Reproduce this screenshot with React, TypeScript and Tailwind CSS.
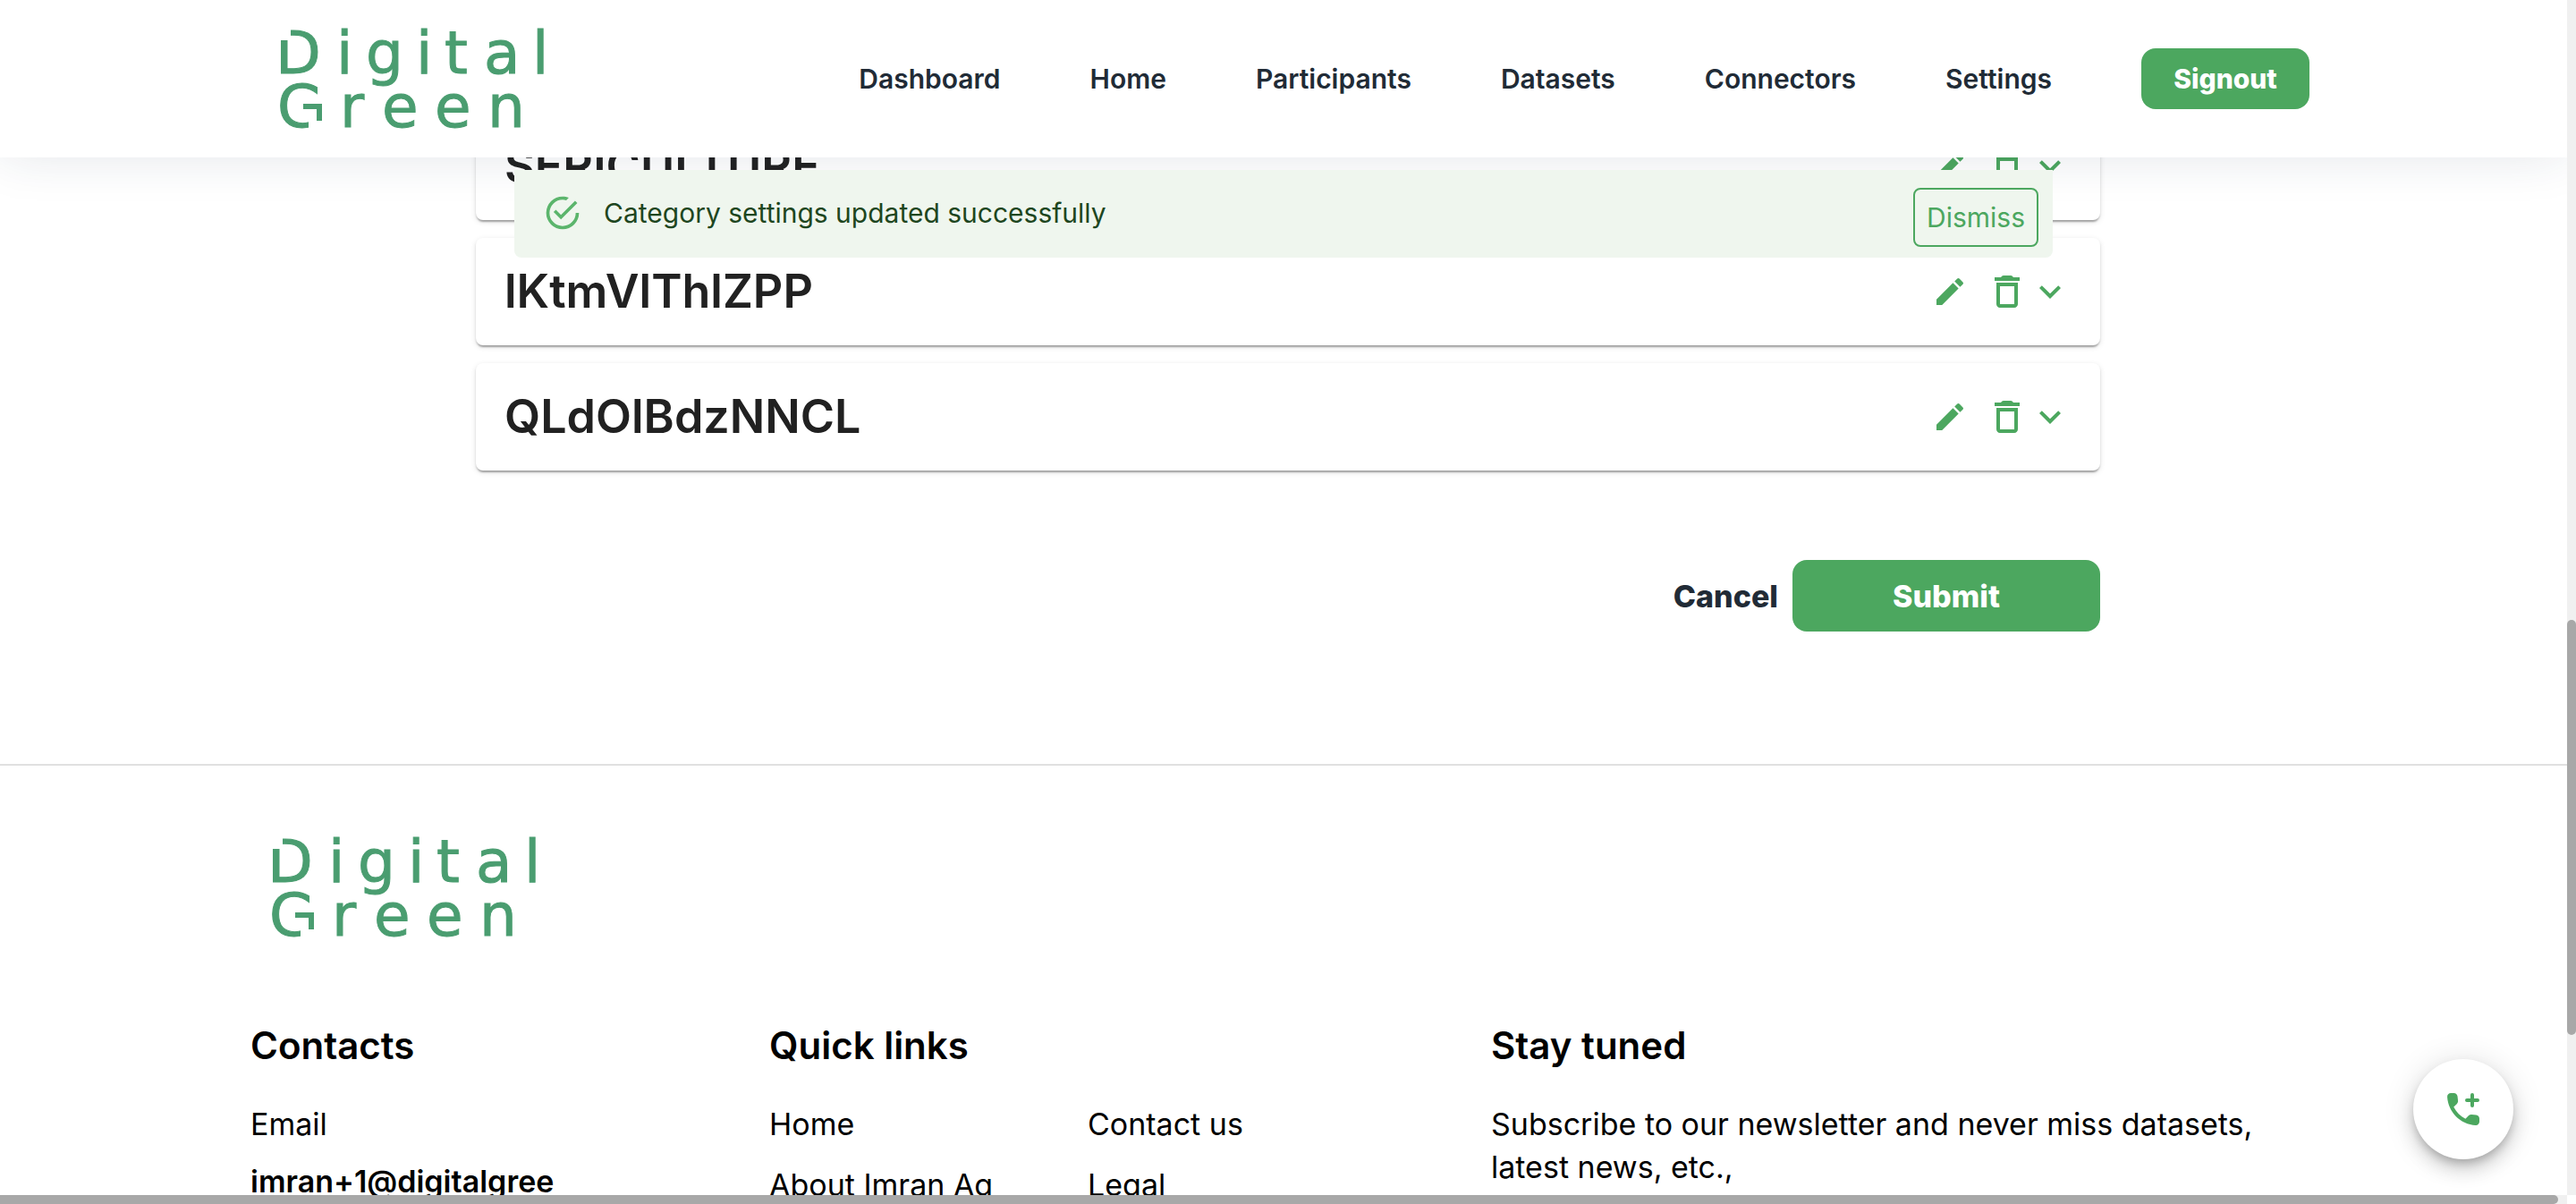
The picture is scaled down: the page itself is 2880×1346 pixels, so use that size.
import type { ReactNode } from "react";

const NAV = ["Dashboard", "Home", "Participants", "Datasets", "Connectors", "Settings"];
const CATEGORIES = ["SERICULTURE", "lKtmVlThlZPP", "QLdOlBdzNNCL"];

function Logo() {
  return (
    <svg viewBox="0 0 300 116" className="h-[116px] w-[300px] overflow-visible" role="img" aria-label="Digital Green">
      <g fill="#4a9d70" stroke="#4a9d70" strokeWidth="1" fontFamily="'DejaVu Sans', sans-serif" fontSize="66">
        <text x="-6 62 95 151 183 227 281" y="52">Digital</text>
        <text x="-4 66 113 172 231" y="112">Green</text>
      </g>
      <path d="M-2 1h13v14H-2zM20 81h28v24H20zM31 81h17v34H31z" fill="#fff" />
      <path d="M25 89h18v16" fill="none" stroke="#4a9d70" strokeWidth="6" />
    </svg>
  );
}

function Icon({ d, className, children }: { d: string; className: string; children?: ReactNode }) {
  return (
    <svg viewBox="0 0 24 24" fill="currentColor" className={className} aria-hidden="true">
      <path d={d} />
      {children}
    </svg>
  );
}

const EDIT =
  "M3 17.25V21h3.75L17.81 9.94l-3.75-3.75L3 17.25zM20.71 7.04a.996.996 0 0 0 0-1.41l-2.34-2.34a.996.996 0 0 0-1.41 0l-1.83 1.83 3.75 3.75 1.83-1.83z";
const TRASH =
  "M6 19c0 1.1.9 2 2 2h8c1.1 0 2-.9 2-2V7H6v12zM8 9h8v10H8V9zm7.5-5-.7-.7a1 1 0 0 0-.7-.3H9.900a1 1 0 0 0-.7.3l-.7.7H5v2h14V4z";
const CHEVRON = "M16.59 8.59 12 13.17 7.41 8.59 6 10l6 6 6-6z";
const SUCCESS =
  "M20,12A8,8 0 0,1 12,20A8,8 0 0,1 4,12A8,8 0 0,1 12,4C12.76,4 13.5,4.11 14.2, 4.31L15.77,2.74C14.61,2.26 13.34,2 12,2A10,10 0 0,0 2,12A10,10 0 0,0 12,22A10,10 0 0, 0 22,12M7.91,10.08L6.5,11.5L11,16L21,6L19.59,4.58L11,13.17L7.91,10.08Z";
const PHONE =
  "M19.23 15.26l-2.54-.29c-.61-.07-1.21.14-1.64.57l-1.84 1.84c-2.83-1.44-5.15-3.75-6.59-6.59l1.85-1.85c.43-.43.64-1.03.57-1.64l-.29-2.52c-.12-1.01-.97-1.77-1.99-1.77H5.03c-1.13 0-2.07.94-2 2.07.53 8.54 7.36 15.36 15.89 15.89 1.13.07 2.07-.87 2.07-2v-1.73c.01-1.01-.75-1.86-1.76-1.98z";

function Header() {
  return (
    <header className="relative z-10 flex h-44 items-center justify-between bg-white pr-72 pl-[314px] shadow-[0_-6px_56px_rgba(30,50,80,0.14)]">
      <a href="#home">
        <Logo />
      </a>
      <nav className="flex items-center gap-[100px] text-[30px] font-semibold text-[#212b36]">
        {NAV.map((n) => (
          <a key={n} href={"#" + n.toLowerCase()}>
            {n}
          </a>
        ))}
        <button type="button" className="h-[68px] w-[188px] rounded-2xl bg-[#4ca75f] font-extrabold text-white">
          Signout
        </button>
      </nav>
    </header>
  );
}

function CategoryCard({ name }: { name: string }) {
  return (
    <section className="flex h-[120px] items-center rounded-lg bg-white px-8 text-[#4ca75f] shadow-[0_4px_2px_-2px_rgba(0,0,0,0.2),0_2px_2px_rgba(0,0,0,0.14),0_2px_6px_rgba(0,0,0,0.12)]">
      <h2 className="grow text-[52px] leading-none font-semibold text-[#212121]">{name}</h2>
      <button type="button" aria-label={"Edit " + name} className="mr-5">
        <Icon d={EDIT} className="size-10" />
      </button>
      <button type="button" aria-label={"Delete " + name}>
        <Icon d={TRASH} className="size-12" />
      </button>
      <button type="button" aria-label={"Expand " + name}>
        <Icon d={CHEVRON} className="size-12" />
      </button>
    </section>
  );
}

function Alert() {
  return (
    <div
      role="alert"
      className="absolute inset-x-[575px] top-[190px] z-20 flex h-[98px] items-start rounded-b-lg bg-[#eff6ee] pr-4 pl-8 text-[30px] text-[#1e4620]"
    >
      <Icon d={SUCCESS} className="mt-[26px] mr-6 size-11 text-[#5bb56c]" />
      <p className="mt-7 grow leading-10">Category settings updated successfully</p>
      <button
        type="button"
        className="mt-5 h-[66px] w-[140px] rounded-lg border-2 border-[#4ca75f] text-[#4ca75f]"
      >
        Dismiss
      </button>
    </div>
  );
}

function Footer() {
  return (
    <footer className="border-t-2 border-[#e0e0e0] pr-[280px] pl-[280px] text-[34px] leading-[48px] text-black">
      <div className="pt-[78px] pb-[95px] pl-[25px]">
        <Logo />
      </div>
      <div className="grid grid-cols-[580fr_807fr_923fr]">
        <section>
          <h3 className="text-[42px] font-semibold">Contacts</h3>
          <p className="mt-10">Email</p>
          <a href="mailto:imran+1@digitalgree" className="mt-4 block font-semibold">
            imran+1@digitalgree
          </a>
        </section>
        <section>
          <h3 className="text-[42px] font-semibold">Quick links</h3>
          <div className="mt-10 grid grid-cols-[356fr_451fr] gap-y-5">
            <a href="#home">Home</a>
            <a href="#contact">Contact us</a>
            <a href="#about">About Imran Ag</a>
            <a href="#legal">Legal</a>
          </div>
        </section>
        <section>
          <h3 className="text-[42px] font-semibold">Stay tuned</h3>
          <p className="mt-10">
            Subscribe to our newsletter and never miss datasets,
            <br />
            latest news, etc.,
          </p>
        </section>
      </div>
    </footer>
  );
}

export default function App() {
  return (
    <div className="grid h-screen grid-cols-[minmax(0,1fr)_10px] grid-rows-[minmax(0,1fr)_10px] bg-white font-['Inter',sans-serif]">
      <div className="relative overflow-hidden">
        <Header />
        <Alert />
        <main className="-mt-[50px] pr-[522px] pb-[148px] pl-[532px]">
          <div className="flex flex-col gap-5">
            {CATEGORIES.map((c) => (
              <CategoryCard key={c} name={c} />
            ))}
          </div>
          <div className="mt-[100px] flex items-center justify-end gap-4 text-[34px] font-extrabold">
            <button type="button" className="text-[#212b36]">
              Cancel
            </button>
            <button type="button" className="h-20 w-[344px] rounded-2xl bg-[#4ca75f] text-white">
              Submit
            </button>
          </div>
        </main>
        <Footer />
        <button
          type="button"
          aria-label="Add call"
          className="absolute right-[60px] bottom-10 z-20 grid size-28 place-items-center rounded-full bg-white text-[#4ca75f] shadow-[0_6px_10px_-2px_rgba(0,0,0,0.2),0_12px_20px_rgba(0,0,0,0.14),0_2px_36px_rgba(0,0,0,0.12)]"
        >
          <Icon d={PHONE} className="size-12">
            <path d="M14 7h6M17 4v6" stroke="currentColor" strokeWidth="2" strokeLinecap="round" />
          </Icon>
        </button>
      </div>
      <div className="bg-[#f0f0f0] pt-[693px]">
        <div className="h-[464px] rounded-full bg-[#a8a8a8]" />
      </div>
      <div className="bg-[#f0f0f0] pr-2.5">
        <div className="h-2.5 rounded-r-full bg-[#a8a8a8]" />
      </div>
    </div>
  );
}
